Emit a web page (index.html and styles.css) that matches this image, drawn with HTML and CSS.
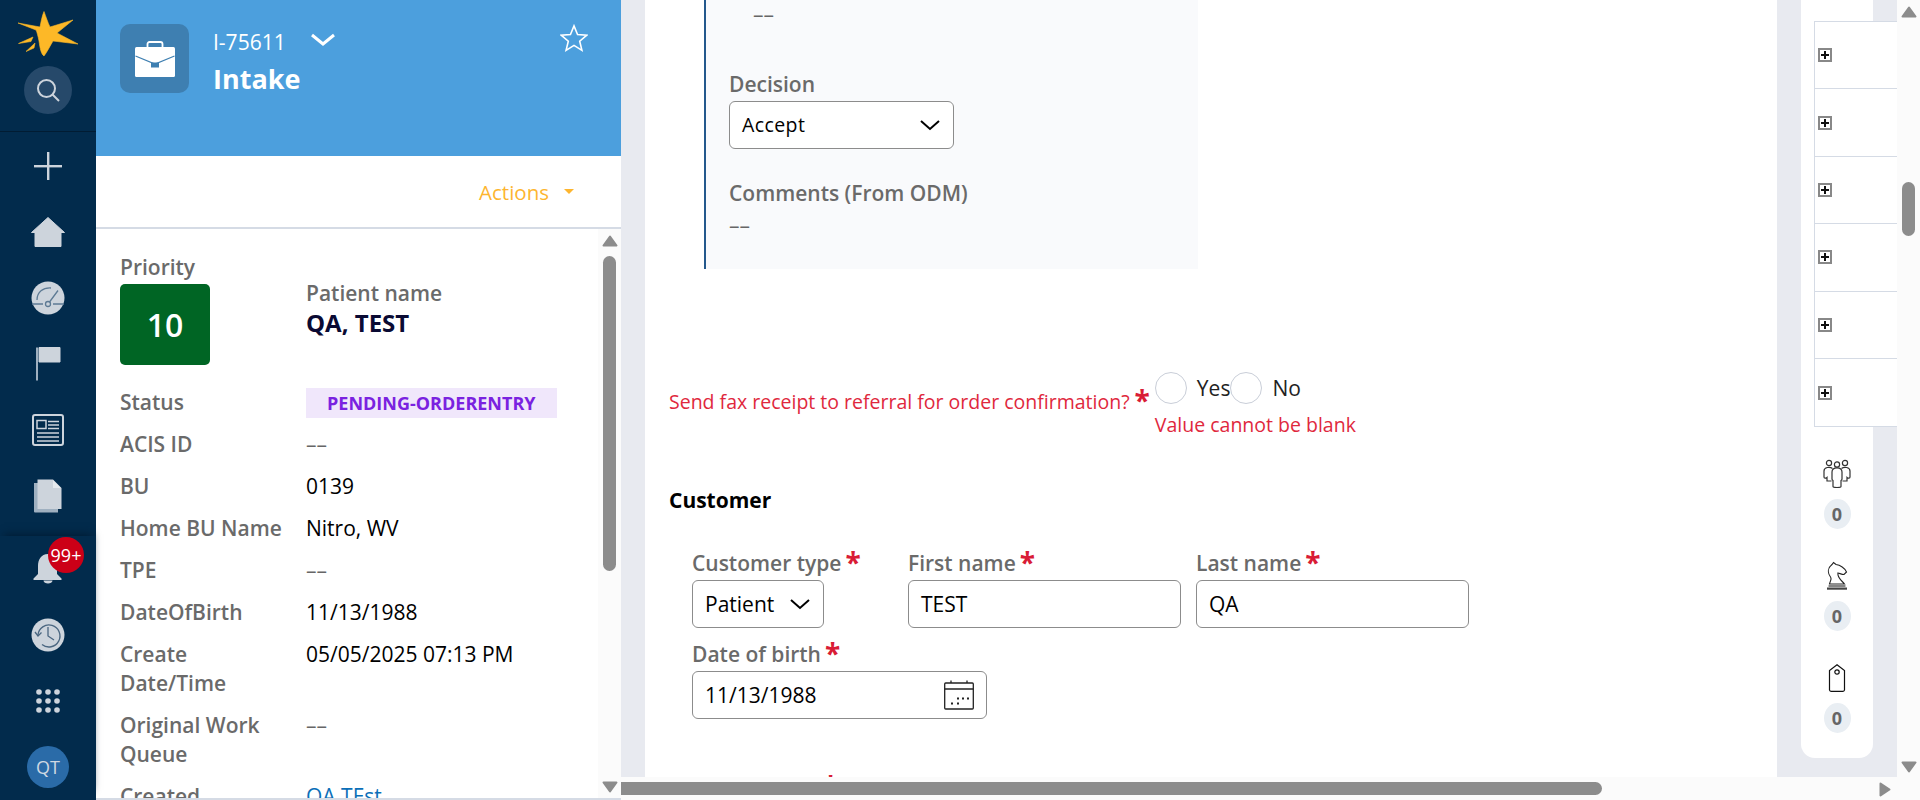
FILE: index.html
```html
<!DOCTYPE html>
<html lang="en">
<head>
<meta charset="utf-8">
<title>Intake</title>
<link rel="stylesheet" href="styles.css">
</head>
<body>
<div class="app">
  <nav class="nav">
    <div class="nav-top">
      <svg class="logo" width="60" height="46" viewBox="18 11 60 46"><path fill="#fdb827" stroke="#fdb827" stroke-width=".6" d="M44 11.500C46 17 48 23 50 27L73 20L57 33L78 44L53 41C50 46 47 52 44 56C41 54 40 48 39 41C38 36 37 32 36 30L18 23L40 27C41 22 42 16 44 11.500ZM18.500 43.500L33 37L31 41.500ZM26 51.500L35 43L34 48Z"/></svg>
      <div class="search"><svg width="24" height="24" viewBox="0 0 24 24" fill="none" stroke="#cdd4dc" stroke-width="2"><circle cx="10.500" cy="10.500" r="8.500"/><path d="M16.500 16.500L23 23"/></svg></div>
    </div>
    <div class="nav-group">
      <div class="nav-item"><svg width="30" height="30" viewBox="0 0 30 30" fill="#cdd4dc"><rect x="14" y="1" width="2.400" height="28"/><rect x="1" y="14" width="28" height="2.400"/></svg></div>
      <div class="nav-item"><svg width="34" height="30" viewBox="0 0 34 30" fill="#cdd4dc"><path d="M17 0.500L33.500 15.500H30V29.500H4V15.500H0.500Z" stroke="#cdd4dc" stroke-linejoin="round"/></svg></div>
      <div class="nav-item"><svg width="34" height="34" viewBox="0 0 34 34"><circle cx="17" cy="17" r="16.500" fill="#cdd4dc"/><g fill="none" stroke="#5d7a94" stroke-width="1.300"><path d="M1 23H12M22 23H33"/><circle cx="17" cy="23" r="2.500"/><path d="M18.500 21L27 9.500M6 19C6 11 12 6.500 20 7"/></g></svg></div>
      <div class="nav-item"><svg width="26" height="34" viewBox="0 0 26 34"><rect x="1" y="0.500" width="2" height="33" fill="#9fb0c0"/><path d="M4 0.500H25V15H4Z" fill="#cdd4dc" stroke="#cdd4dc" stroke-linejoin="round"/></svg></div>
      <div class="nav-item"><svg width="32" height="32" viewBox="0 0 32 32" fill="none" stroke="#cdd4dc"><rect x="1" y="1" width="30" height="30" rx="2" stroke-width="2"/><rect x="5" y="6.500" width="9" height="8" stroke-width="1.500"/><path d="M16 7.500H27M16 11H27M16 14.500H27M5 19H27M5 23H27M5 27H27" stroke-width="1.500"/></svg></div>
      <div class="nav-item"><svg width="30" height="34" viewBox="0 0 30 34"><path d="M1 4H6V29H25V33.500H2A1 1 0 0 1 1 32.500Z" fill="#9fb0c0"/><path d="M4.500 0.500H20L28.500 9V30H4.500Z" fill="#cdd4dc"/><path d="M20 1V9H28" fill="#fff" fill-opacity=".5"/></svg></div>
    </div>
    <div class="nav-group nav-lower">
      <div class="nav-item">
        <svg width="30" height="30" viewBox="0 0 30 30" fill="#cdd4dc"><path d="M15 0C22 0 24 6 24 12V20L28.500 24.500V26H0.500V24.500L5 20V12C5 6 8 0 15 0Z"/><path d="M10.500 26.500H19.500C19.500 30.500 10.500 30.500 10.500 26.500Z"/></svg>
        <span class="count-badge">99+</span>
      </div>
      <div class="nav-item"><svg width="34" height="34" viewBox="0 0 34 34"><circle cx="17" cy="17" r="16.500" fill="#cdd4dc"/><g fill="none" stroke="#4a6680" stroke-width="1.300"><path d="M7 17A11 11 0 1 1 11 26.500"/><path d="M4 14L7 18L10.500 14.500M17 9V18L23 22"/></g></svg></div>
      <div class="nav-item"><svg class="dots" width="26" height="26" viewBox="0 0 26 26" fill="#cdd4dc"><circle cx="4" cy="4" r="2.800"/><circle cx="13" cy="4" r="2.800"/><circle cx="22" cy="4" r="2.800"/><circle cx="4" cy="13" r="2.800"/><circle cx="13" cy="13" r="2.800"/><circle cx="22" cy="13" r="2.800"/><circle cx="4" cy="22" r="2.800"/><circle cx="13" cy="22" r="2.800"/><circle cx="22" cy="22" r="2.800"/></svg></div>
      <div class="nav-item"><span class="avatar">QT</span></div>
    </div>
  </nav>

  <aside class="case">
    <header class="case-head">
      <div class="case-icon"><svg width="40" height="36" viewBox="0 0 40 36"><path d="M12.500 7V3A2 2 0 0 1 14.500 1H25.500A2 2 0 0 1 27.500 3V7" fill="none" stroke="#fff" stroke-width="1.800"/><rect x="0" y="6" width="40" height="30" rx="1.500" fill="#fff"/><path d="M0.500 15L20 23L39.500 15" fill="none" stroke="#3e7fb1" stroke-width="1.200"/><rect x="16" y="21.500" width="8" height="5" fill="#3e7fb1"/></svg></div>
      <div class="case-title">
        <div class="case-id">I-75611<svg class="case-chevron" width="24" height="14" viewBox="0 0 24 14" fill="none" stroke="#fff" stroke-width="3"><path d="M1 2L12 11L23 2"/></svg></div>
        <div class="case-name">Intake</div>
      </div>
      <svg class="fav" width="28" height="28" viewBox="0 0 30 30" fill="none" stroke="#fff" stroke-width="1.700"><path d="M15 2L18.800 11.300L28.700 12L21.100 18.400L23.500 28.200L15 22.900L6.500 28.200L8.900 18.400L1.300 12L11.200 11.300Z"/></svg>
    </header>
    <div class="actions"><span class="actions-label">Actions</span><span class="actions-caret"></span></div>
    <div class="case-body">
      <div class="details">
        <div class="summary">
          <div class="summary-prio">
            <div class="label">Priority</div>
            <div class="prio-box">10</div>
          </div>
          <div class="summary-name">
            <div class="label">Patient name</div>
            <div class="patient">QA, TEST</div>
          </div>
        </div>
        <div class="row row-status"><div class="label">Status</div><div><span class="status">PENDING-ORDERENTRY</span></div></div>
        <div class="row"><div class="label">ACIS ID</div><div class="empty">––</div></div>
        <div class="row"><div class="label">BU</div><div class="value">0139</div></div>
        <div class="row"><div class="label">Home BU Name</div><div class="value">Nitro, WV</div></div>
        <div class="row"><div class="label">TPE</div><div class="empty">––</div></div>
        <div class="row"><div class="label">DateOfBirth</div><div class="value">11/13/1988</div></div>
        <div class="row"><div class="label">Create Date/Time</div><div class="value">05/05/2025 07:13 PM</div></div>
        <div class="row"><div class="label">Original Work Queue</div><div class="empty">––</div></div>
        <div class="row"><div class="label">Created</div><div class="link">QA TEst</div></div>
      </div>
      <div class="vbar vbar-case">
        <svg class="arrow" width="16" height="12" viewBox="0 0 16 12"><path d="M8 1.500L14.500 10.500H1.500Z" fill="#8c8c8c" stroke="#8c8c8c" stroke-width="2" stroke-linejoin="round"/></svg>
        <div class="thumb thumb-case"></div>
        <svg class="arrow arrow-end" width="16" height="12" viewBox="0 0 16 12"><path d="M8 10.500L14.500 1.500H1.500Z" fill="#8c8c8c" stroke="#8c8c8c" stroke-width="2" stroke-linejoin="round"/></svg>
      </div>
    </div>
  </aside>

  <main class="work">
    <div class="work-top">
      <div class="canvas">
        <section class="form">
          <div class="review">
            <div class="empty review-first">––</div>
            <div class="form-label review-decision">Decision</div>
            <div class="control select-decision"><span class="select-text">Accept</span><svg width="22" height="12" viewBox="0 0 22 12" fill="none" stroke="#000" stroke-width="2"><path d="M2 2L11 10L20 2"/></svg></div>
            <div class="form-label review-comments">Comments (From ODM)</div>
            <div class="empty review-last">––</div>
          </div>
          <div class="fax">
            <div class="fax-label">Send fax receipt to referral for order confirmation?<span class="req req-fax">*</span></div>
            <div class="fax-answer">
              <div class="radios">
                <span class="radio"></span><span class="radio-text">Yes</span>
                <span class="radio"></span><span class="radio-text">No</span>
              </div>
              <div class="error">Value cannot be blank</div>
            </div>
          </div>
          <h2 class="section-title">Customer</h2>
          <div class="fields">
            <div class="field field-type">
              <div class="form-label">Customer type<span class="req">*</span></div>
              <div class="control"><span>Patient</span><svg width="22" height="12" viewBox="0 0 22 12" fill="none" stroke="#000" stroke-width="2"><path d="M2 2L11 10L20 2"/></svg></div>
            </div>
            <div class="field field-name">
              <div class="form-label">First name<span class="req">*</span></div>
              <div class="control">TEST</div>
            </div>
            <div class="field field-name">
              <div class="form-label">Last name<span class="req">*</span></div>
              <div class="control">QA</div>
            </div>
          </div>
          <div class="fields">
            <div class="field field-date">
              <div class="form-label">Date of birth<span class="req">*</span></div>
              <div class="control"><span>11/13/1988</span><svg width="30" height="30" viewBox="0 0 30 30" fill="none" stroke="#222" stroke-width="1.300"><rect x="0.700" y="3" width="28.600" height="26" rx="1"/><path d="M0.700 9H29.300M7 0.500V3M23 0.500V3"/><path d="M7 23.500H9M13 23.500H15M13 18.500H15M18 18.500H20M23 18.500H25" stroke-width="2"/></svg></div>
            </div>
          </div>
          <div class="next-req"><span class="req">*</span></div>
        </section>
        <aside class="rail">
          <div class="rail-table">
            <div class="rail-row"><span class="expand"></span></div>
            <div class="rail-row"><span class="expand"></span></div>
            <div class="rail-row"><span class="expand"></span></div>
            <div class="rail-row"><span class="expand"></span></div>
            <div class="rail-row"><span class="expand"></span></div>
            <div class="rail-row"><span class="expand"></span></div>
          </div>
          <div class="stat">
            <svg width="28" height="30" viewBox="0 0 28 30" fill="none" stroke="#333" stroke-width="1.200"><circle cx="6" cy="4" r="2.600"/><circle cx="14" cy="5.500" r="2.600"/><circle cx="22" cy="4" r="2.600"/><path d="M9.500 9.500C7 7.500 1 8 1 12V18C1 19.500 3 19.500 4 18.500V22H8.500"/><path d="M18.500 9.500C21 7.500 27 8 27 12V18C27 19.500 25 19.500 24 18.500V22H19.500"/><path d="M9 13C9 7.500 19 7.500 19 13V20C19 21 18 21.500 18 21.500V27.500C18 28.800 10 28.800 10 27.500V21.500C10 21.500 9 21 9 20Z"/></svg>
            <span class="stat-count">0</span>
          </div>
          <div class="stat">
            <svg width="22" height="30" viewBox="0 0 22 30" fill="none" stroke="#222" stroke-width="1.100"><path d="M3.500 23C4.500 19 6 18 4.500 16C1.500 12 1.500 7 6 3.500L7.500 1.500L10 3.500C14 4 19 7 20.500 11L18 13.500C16 13.500 14 12.500 12 12C11 16 15 19 18.500 23Z"/><path d="M2.500 25H19.500"/><rect x="1" y="26.500" width="20" height="2.200" fill="#444" stroke="none"/></svg>
            <span class="stat-count">0</span>
          </div>
          <div class="stat">
            <svg width="18" height="30" viewBox="0 0 18 30" fill="none" stroke="#111" stroke-width="1.200"><path d="M9 1.700L16.500 7.500V27A1.500 1.500 0 0 1 15 28.300H3A1.500 1.500 0 0 1 1.500 27V7.500Z"/><circle cx="9" cy="9" r="2.200"/></svg>
            <span class="stat-count">0</span>
          </div>
        </aside>
      </div>
      <div class="vbar vbar-page">
        <svg class="arrow" width="16" height="12" viewBox="0 0 16 12"><path d="M8 1.500L14.500 10.500H1.500Z" fill="#8c8c8c" stroke="#8c8c8c" stroke-width="2" stroke-linejoin="round"/></svg>
        <div class="thumb thumb-page"></div>
        <svg class="arrow arrow-end" width="16" height="12" viewBox="0 0 16 12"><path d="M8 10.500L14.500 1.500H1.500Z" fill="#8c8c8c" stroke="#8c8c8c" stroke-width="2" stroke-linejoin="round"/></svg>
      </div>
    </div>
    <div class="hbar">
      <div class="hthumb"></div>
      <svg class="harrow" width="12" height="15" viewBox="0 0 12 15"><path d="M1.500 1.500L10.500 7.500L1.500 13.500Z" fill="#8c8c8c" stroke="#8c8c8c" stroke-width="2" stroke-linejoin="round"/></svg>
    </div>
  </main>
</div>
</body>
</html>
```

FILE: styles.css
```css
* { box-sizing: border-box; }
html, body { margin: 0; height: 800px; overflow: hidden; background: #fff; }
body { font-family: "Open Sans", "Liberation Sans", sans-serif; font-size: 21px; color: #000; }
.app { display: flex; height: 800px; overflow: hidden; }

/* Left navigation */
.nav { width: 96px; flex: none; background: #022b4c; display: flex; flex-direction: column; }
.nav-top { height: 133px; border-bottom: 1px solid #011c33; display: flex; flex-direction: column; align-items: center; padding-top: 11px; }
.logo { display: block; }
.search { width: 48px; height: 48px; margin-top: 9px; border-radius: 50%; background: #26496a; display: flex; align-items: center; justify-content: center; }
.nav-group { padding-top: 1px; display: flex; flex-direction: column; }
.nav-item { height: 66px; display: flex; align-items: center; justify-content: center; position: relative; }
.nav-lower { margin-top: 7px; box-shadow: 0 -6px 8px -4px #011d35; padding-top: 0; }
.count-badge { position: absolute; left: 48px; top: 1px; width: 36px; height: 36px; border-radius: 50%; background: #cc0017; color: #fff; font-size: 18px; line-height: 36px; text-align: center; }
.avatar { width: 42px; height: 42px; border-radius: 50%; background: #2a6ba8; color: #cfd8e2; font-size: 18px; line-height: 42px; text-align: center; }

/* Case panel */
.case { width: 525px; flex: none; display: flex; flex-direction: column; height: 800px; border-bottom: 2px solid #d5dbe5; }
.case-head { height: 156px; flex: none; background: #4c9fdd; display: flex; padding: 24px 24px 0 24px; color: #fff; }
.case-icon { width: 69px; height: 69px; border-radius: 10px; background: #3e7fb1; display: flex; align-items: center; justify-content: center; }
.case-title { margin-left: 24px; flex: 1; }
.case-id { font-size: 21px; line-height: 30px; margin-top: 3px; display: flex; align-items: flex-start; }
.case-chevron { margin: 6px 0 0 25px; }
.case-name { font-size: 27px; font-weight: 700; line-height: 40px; margin-top: 2px; }
.fav { margin: 0 9px 0 0; flex: none; }
.actions { height: 73px; flex: none; border-bottom: 2px solid #d5dbe5; display: flex; align-items: center; justify-content: flex-end; padding: 0 47px 0 0; }
.actions-label { font-size: 20.500px; color: #fdb52f; }
.actions-caret { width: 0; height: 0; margin-left: 15px; border-left: 5px solid transparent; border-right: 5px solid transparent; border-top: 5px solid #fdb52f; }
.case-body { flex: 1; min-height: 0; display: flex; }
.details { flex: 1; min-width: 0; overflow: hidden; padding: 24px 0 0 24px; }
.label { font-size: 21px; line-height: 29px; font-weight: 600; color: #6a6a6a; }
.summary { display: flex; margin-bottom: 23px; }
.summary-prio { width: 186px; flex: none; }
.prio-box { width: 90px; height: 81px; margin-top: 2px; border-radius: 5px; background: #006524; color: #fff; font-size: 32px; font-weight: 600; line-height: 81px; text-align: center; }
.summary-name { margin-top: 26px; }
.patient { font-size: 24px; line-height: 32px; font-weight: 700; color: #0a0a33; margin-top: -1px; }
.row { display: grid; grid-template-columns: 186px 1fr; margin-bottom: 13px; }
.row-status { margin-bottom: 12px; }
.row .label { padding-right: 18px; }
.value { font-size: 21px; line-height: 29px; }
.empty { font-size: 21px; line-height: 29px; color: #666; }
.link { font-size: 21px; line-height: 29px; color: #0b6fb8; }
.status { display: inline-block; width: 251px; height: 30px; padding-left: 21px; background: #f0e7fb; color: #7a22e0; font-size: 18px; line-height: 30px; font-weight: 700; }

/* Scrollbars */
.vbar { width: 23px; flex: none; background: #fbfbfb; display: flex; flex-direction: column; align-items: center; }
.vbar-case { padding-top: 6px; padding-bottom: 5px; }
.vbar-page { padding-top: 6px; padding-bottom: 4px; }
.arrow { display: block; flex: none; }
.arrow-end { margin-top: auto; }
.thumb { width: 13px; background: #8c8c8c; border-radius: 7px; flex: none; }
.thumb-case { height: 315px; margin-top: 9px; }
.thumb-page { height: 54px; margin-top: 164px; }
.hbar { height: 23px; flex: none; background: #fbfbfb; display: flex; padding: 5px 29px 0 0; }
.hthumb { width: 981px; height: 13px; background: #8c8c8c; border-radius: 0 7px 7px 0; }
.harrow { margin-left: auto; }

/* Work area */
.work { flex: 1; min-width: 0; display: flex; flex-direction: column; }
.work-top { flex: 1; min-height: 0; display: flex; }
.canvas { flex: 1; min-width: 0; background: #e8eaf0; display: flex; padding: 0 24px; gap: 24px; }
.form { width: 1132px; flex: none; background: #fff; height: 777px; overflow: hidden; }
.review { margin-left: 59px; width: 494px; height: 269px; background: #f9fafc; border-left: 2px solid #24588c; padding-left: 23px; }
.review-first { padding-left: 24px; }
.form-label { font-size: 21px; line-height: 28px; font-weight: 600; color: #6a6a6a; white-space: nowrap; }
.review-decision { margin-top: 41px; }
.control { height: 48px; border: 1px solid #8c8c8c; border-radius: 6px; background: #fff; margin-top: 3px; padding: 0 12px; font-size: 21px; line-height: 46px; display: flex; align-items: center; justify-content: space-between; }
.select-decision { width: 225px; margin-top: 3px; }
.select-text { font-size: 19.500px; letter-spacing: .4px; }
.review-comments { margin-top: 30px; }
.review-last { margin-top: 4px; }
.fax { display: flex; margin: 103px 0 0 24px; }
.fax-label { color: #e0283d; font-size: 19.500px; line-height: 28px; margin-top: 16px; }
.req { color: #d91c36; font-weight: 700; font-size: 28px; line-height: 0; margin-left: 4px; vertical-align: -2px; }
.req-fax { margin-left: 5px; margin-right: 5px; }
.radios { display: flex; align-items: center; height: 32px; }
.radio { width: 32px; height: 32px; border-radius: 50%; border: 1px solid #c9ced8; background: #fff; flex: none; }
.radio-text { margin-left: 10px; font-size: 21px; color: #222; }
.error { color: #e0283d; font-size: 19.500px; line-height: 28px; margin-top: 7px; }
.section-title { margin: 47px 0 0 24px; font-size: 21px; line-height: 28px; font-weight: 700; }
.fields { display: flex; margin: 35px 0 0 47px; }
.fields + .fields { margin-top: 12px; }
.field-type { width: 132px; margin-right: 84px; }
.field-name { width: 273px; margin-right: 15px; }
.field-date { width: 295px; }
.next-req { margin: 54px 0 0 174px; line-height: 28px; }

/* Rail */
.rail { width: 72px; flex: none; height: 758px; background: #fff; border-radius: 0 0 14px 14px; }
.rail-table { margin: 21px 0 0 13px; width: 83px; border: solid #d5dbe5; border-width: 1px 0 1px 1px; background: #fff; }
.rail-row { height: 67.400px; border-bottom: 1px solid #d5dbe5; display: flex; align-items: center; padding-left: 3px; }
.rail-row:last-child { border-bottom: 0; }
.expand { width: 14px; height: 14px; border: 2px solid #888; background: linear-gradient(#111, #111) center / 8px 2px no-repeat, linear-gradient(#111, #111) center / 2px 8px no-repeat, #fff; }
.stat { display: flex; flex-direction: column; align-items: center; margin-top: 32px; height: 70px; }
.stat svg { display: block; flex: none; }
.stat-count { width: 27px; height: 30px; margin-top: 10px; border-radius: 50%; background: #e9eef3; color: #666; font-size: 18px; font-weight: 700; line-height: 30px; text-align: center; }
```
